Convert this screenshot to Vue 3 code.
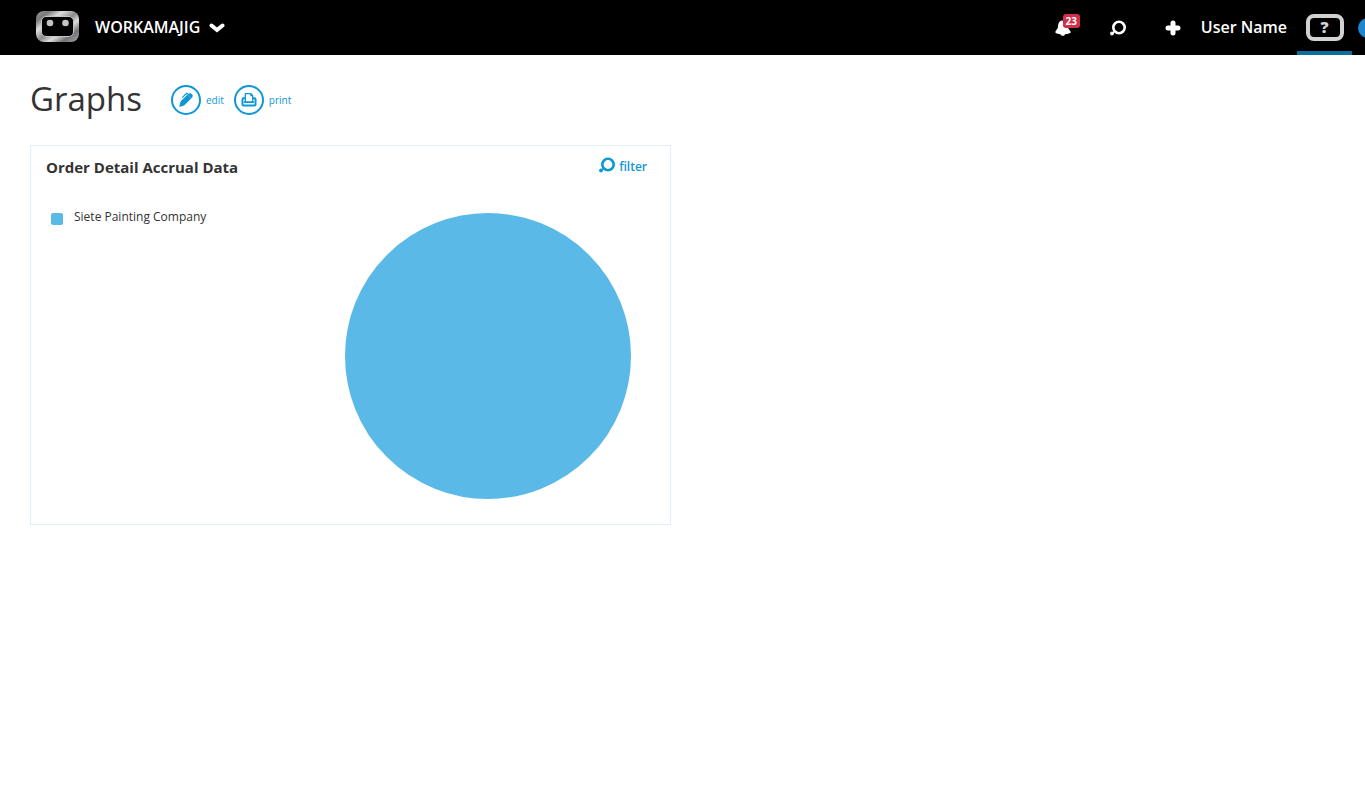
<script setup>
import { ref, computed } from 'vue'

const unread = ref(23)
const series = ref([{ name: 'Siete Painting Company', color: '#5bb9e7', value: 1 }])

const slices = computed(() => {
  const total = series.value.reduce((sum, s) => sum + s.value, 0)
  let offset = 0
  return series.value.map((s) => {
    const share = (s.value / total) * 100
    const slice = { ...s, dash: `${share} ${100 - share}`, offset: -offset }
    offset += share
    return slice
  })
})
</script>

<template>
  <div class="page">
    <header class="topbar">
      <button class="brand" type="button">
        <svg class="robot" viewBox="0 0 43 31" aria-hidden="true">
          <defs>
            <linearGradient id="metal" x1="0" y1="0" x2="1" y2="1">
              <stop offset="0" stop-color="#a0a0a2" />
              <stop offset="0.16" stop-color="#77777a" />
              <stop offset="0.32" stop-color="#dedede" />
              <stop offset="0.5" stop-color="#8b8b8e" />
              <stop offset="0.64" stop-color="#dcdcdc" />
              <stop offset="0.8" stop-color="#737377" />
              <stop offset="1" stop-color="#a8a8aa" />
            </linearGradient>
          </defs>
          <rect x="0" y="0" width="43" height="31" rx="8" fill="url(#metal)" />
          <rect x="5.500" y="5.500" width="32" height="20" rx="4.500" fill="#000" stroke="#c4c4c6" />
          <circle cx="14" cy="12" r="3.300" fill="#c4c4c4" />
          <circle cx="29.500" cy="12" r="3.300" fill="#c4c4c4" />
        </svg>
        <span>WORKAMAJIG</span>
        <svg class="chevron" viewBox="0 0 16 10" aria-hidden="true">
          <path d="M2.500 2.500 L8 7 L13.500 2.500" fill="none" stroke="#fff" stroke-width="4" stroke-linecap="round" />
        </svg>
      </button>

      <nav class="tools" aria-label="Account">
        <button class="tool" type="button" aria-label="Notifications">
          <svg viewBox="0 0 16 16" aria-hidden="true">
            <path d="M7 0.500 C3.800 0.800 3.200 4 3 7 C2.800 9.200 0.300 10.500 0.300 12.300 C0.300 13.600 3 14 5.500 14.200 C6 16.200 9.500 16.200 10 14.200 C12.800 14 15.700 13.600 15.700 12.300 C15.700 10.500 13.300 9.500 12.800 7 C12.300 4 11.500 0.500 7 0.500Z" fill="#fff" />
          </svg>
          <span class="badge">{{ unread }}</span>
        </button>
        <button class="tool" type="button" aria-label="Search">
          <svg viewBox="0 0 16 16" aria-hidden="true">
            <circle cx="9" cy="7.500" r="5.700" fill="none" stroke="#fff" stroke-width="2.600" />
            <path d="M2 13.500 L5 11" stroke="#fff" stroke-width="1.500" />
            <circle cx="2" cy="13.500" r="1.900" fill="#fff" />
          </svg>
        </button>
        <button class="tool" type="button" aria-label="Add">
          <svg viewBox="0 0 16 16" aria-hidden="true">
            <path d="M8 3 V13 M3 8 H13" stroke="#fff" stroke-width="5" stroke-linecap="round" />
          </svg>
        </button>
        <button class="user" type="button">User Name</button>
        <button class="help" type="button" aria-label="Help">
          <span class="help-box">?</span>
        </button>
        <button class="more" type="button" aria-label="More"></button>
      </nav>
    </header>

    <main class="content">
      <div class="heading">
        <h1>Graphs</h1>
        <a class="action" href="#edit">
          <span class="ring">
            <svg viewBox="0 0 16 16" aria-hidden="true">
              <path d="M1.200 15 L2.300 10.500 Q2.500 9.500 3.200 8.800 L9.300 2.700 L13.200 6.600 L7 12.800 Q6.300 13.500 5.500 13.700Z" fill="#0f97d5" />
              <path d="M9.300 2.700 L11 1.600 Q12.500 0.800 13.900 2.100 Q15.200 3.400 14.500 4.900 L13.200 6.600Z" fill="#0f97d5" />
              <path d="M10.200 2.300 L8.600 1.300 L4.200 5.600" fill="none" stroke="#0f97d5" stroke-width="1.200" />
            </svg>
          </span>
          <span>edit</span>
        </a>
        <a class="action" href="#print">
          <span class="ring">
            <svg viewBox="0 0 16 16" aria-hidden="true">
              <path d="M4.200 6.300 H2.500 Q1.500 6.300 1.500 7.300 V12.500 Q1.500 13.500 2.500 13.500 H13.500 Q14.500 13.500 14.500 12.500 V7.300 Q14.500 6.300 13.500 6.300 H11.800" fill="none" stroke="#0f97d5" stroke-width="2" />
              <path d="M3 10.200 H13" stroke="#0f97d5" stroke-width="1.600" />
              <path d="M4.300 10 V1.700 H9.800 L11.700 3.600 V10Z" fill="#fff" stroke="#0f97d5" stroke-width="1.300" />
              <path d="M9.300 1.600 V4.200 H12Z" fill="#0f97d5" />
            </svg>
          </span>
          <span>print</span>
        </a>
      </div>

      <div class="board">
        <section class="card">
          <div class="card-head">
            <h2>Order Detail Accrual Data</h2>
            <a class="filter" href="#filter">
              <svg viewBox="0 0 16 16" aria-hidden="true">
                <circle cx="9" cy="7.500" r="5.700" fill="none" stroke="#0f97d5" stroke-width="2.600" />
                <path d="M2 13.500 L5 11" stroke="#0f97d5" stroke-width="1.500" />
                <circle cx="2" cy="13.500" r="1.900" fill="#0f97d5" />
              </svg>
              <span>filter</span>
            </a>
          </div>
          <div class="chart">
            <ul class="legend">
              <li v-for="s in series" :key="s.name">
                <span class="swatch" :style="{ background: s.color }"></span>
                <span>{{ s.name }}</span>
              </li>
            </ul>
            <svg class="pie" viewBox="0 0 286 286" role="img" aria-label="Accrual data by company">
              <circle
                v-for="s in slices"
                :key="s.name"
                cx="143"
                cy="143"
                r="71.500"
                fill="none"
                :stroke="s.color"
                stroke-width="143"
                pathLength="100"
                :stroke-dasharray="s.dash"
                :stroke-dashoffset="s.offset"
              />
            </svg>
          </div>
        </section>
      </div>
    </main>
  </div>
</template>

<style>
body {
  background: #fff;
}
</style>

<style scoped>
.page {
  font-family: "Open Sans", "Noto Sans", sans-serif;
  color: #333;
}
button {
  margin: 0;
  padding: 0;
  border: 0;
  background: none;
  font: inherit;
  color: inherit;
  cursor: pointer;
}
a {
  color: #0f97d5;
  text-decoration: none;
}
svg {
  display: block;
  flex: none;
}
.topbar {
  display: flex;
  justify-content: space-between;
  height: 55px;
  padding-left: 36px;
  overflow: hidden;
  background: #000;
  color: #fff;
  font-size: 16px;
  font-weight: 600;
}
.brand {
  display: flex;
  align-items: center;
  padding-bottom: 2px;
}
.robot {
  width: 43px;
  height: 31px;
  margin-right: 16px;
}
.chevron {
  width: 16px;
  height: 10px;
  margin: 3px 0 0 9px;
}
.tools {
  display: flex;
  align-items: center;
  margin-right: -13px;
}
.tool {
  position: relative;
  display: flex;
  align-items: center;
  justify-content: center;
  width: 55px;
  height: 55px;
}
.tool svg {
  width: 16px;
  height: 16px;
}
.badge {
  position: absolute;
  top: 14px;
  left: 27px;
  width: 17px;
  border-radius: 3px;
  background: #d0304a;
  font-size: 10px;
  font-weight: 700;
  line-height: 14px;
  text-align: center;
}
.user {
  padding-bottom: 2px;
}
.help {
  display: flex;
  align-items: center;
  justify-content: center;
  box-sizing: border-box;
  width: 55px;
  height: 55px;
  margin-left: 10px;
  border-top: 4px solid transparent;
  border-bottom: 4px solid #0a6f9f;
}
.help-box {
  box-sizing: border-box;
  width: 38px;
  height: 27px;
  border: 4px solid #d2d2d2;
  border-radius: 8px;
  color: #d2d2d2;
  font-weight: 800;
  line-height: 19px;
}
.more {
  width: 20px;
  height: 20px;
  margin-left: 6px;
  border-radius: 50%;
  background: #1c87cd;
}
.content {
  padding: 22px 30px;
}
.heading {
  display: flex;
  align-items: center;
  gap: 10px;
  margin-bottom: 23px;
}
h1 {
  margin: 0 19px 0 0;
  padding-bottom: 2px;
  font-size: 33px;
  font-weight: 400;
  line-height: 43px;
}
.action {
  display: flex;
  align-items: center;
  gap: 5px;
  font-size: 10px;
  line-height: 14px;
}
.ring {
  display: flex;
  align-items: center;
  justify-content: center;
  box-sizing: border-box;
  width: 30px;
  height: 30px;
  border: 2px solid #0f97d5;
  border-radius: 50%;
}
.ring svg {
  width: 16px;
  height: 16px;
}
.board {
  display: grid;
  grid-template-columns: 1fr 1fr;
  gap: 23px;
}
.card {
  border: 1px solid #dceffa;
}
.card-head {
  display: flex;
  justify-content: space-between;
  padding: 11px 23px 0 15px;
}
h2 {
  margin: 0;
  font-size: 15px;
  font-weight: 700;
  line-height: 20px;
}
.filter {
  display: flex;
  gap: 4px;
  font-size: 12px;
  font-weight: 600;
  line-height: 20px;
}
.filter svg {
  width: 16px;
  height: 16px;
}
.chart {
  display: flex;
  justify-content: space-between;
  padding: 32px 39px 25px 20px;
}
.legend {
  margin: 0;
  padding: 0;
  list-style: none;
  font-size: 12px;
  line-height: 16px;
}
.legend li {
  display: flex;
  align-items: flex-end;
  gap: 11px;
}
.swatch {
  width: 12px;
  height: 12px;
  border-radius: 2px;
}
.pie {
  width: 286px;
  height: 286px;
  margin-top: 4px;
}
</style>
